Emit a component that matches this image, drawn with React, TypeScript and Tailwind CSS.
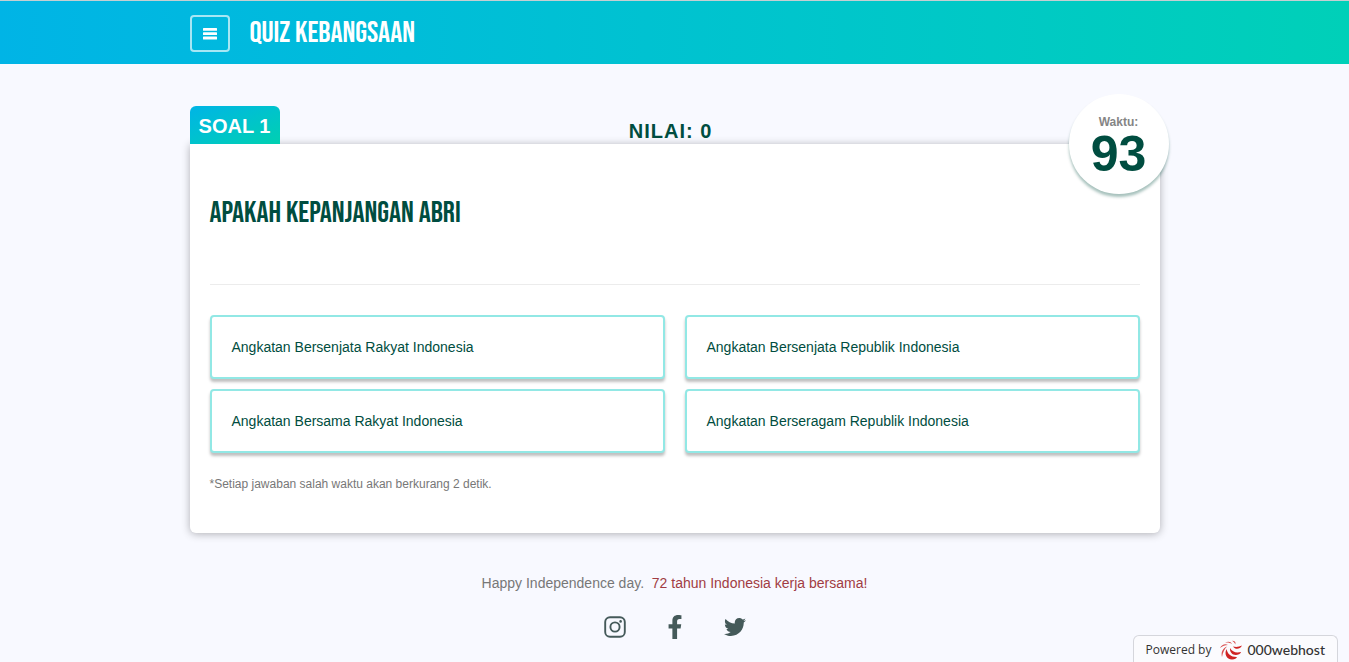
import { FaFacebookF, FaTwitter } from "react-icons/fa";

const answers = [
  "Angkatan Bersenjata Rakyat Indonesia",
  "Angkatan Bersenjata Republik Indonesia",
  "Angkatan Bersama Rakyat Indonesia",
  "Angkatan Berseragam Republik Indonesia",
];

function MenuIcon() {
  return (
    <svg viewBox="0 0 14 12" className="h-3 w-[14px]" fill="currentColor" aria-hidden="true">
      <rect y="0" width="14" height="2.800" rx=".5" />
      <rect y="4.300" width="14" height="2.800" rx=".5" />
      <rect y="8.600" width="14" height="2.800" rx=".5" />
    </svg>
  );
}

function InstagramIcon() {
  return (
    <svg viewBox="0 0 24 24" className="size-6" fill="none" stroke="currentColor" strokeWidth="1.9" aria-hidden="true">
      <rect x="2.200" y="2.200" width="19.600" height="19.600" rx="4.800" />
      <circle cx="12" cy="12" r="4.600" />
      <circle cx="17.600" cy="6.400" r="1.300" fill="currentColor" stroke="none" />
    </svg>
  );
}

function HostLogo() {
  return (
    <svg viewBox="0 0 24 20" className="h-5 w-6" fill="#cf2323" aria-hidden="true">
      <path d="M1 8C3 4.500 6 3.500 9 5C6 5 3.500 6 1 8Z" opacity=".8" />
      <path d="M6 2.600C9 1 12 1.500 13 4C11 2.800 9 2.300 6 2.600Z" opacity=".8" />
      <path d="M13 .8C16 .8 17 2 16.300 4.500C15.600 2.800 14.600 1.600 13 .8Z" opacity=".8" />
      <path d="M8 6.500C3.500 8.500 1.800 12 3 17C3.800 12.500 5.500 9 8 6.500Z" opacity=".8" />
      <path d="M7.500 9C5 14 7.500 19.400 13 19.400C16 19.400 17.300 18.300 18 17C12 17.200 8.500 14 7.500 9Z" />
      <path d="M11 8C10.600 13.500 15 16.400 20 14.300C21.200 13.800 21.700 13 22 12C17 13.200 13.300 12 11 8Z" />
      <path d="M14 6.500C16.500 10 21 9.300 23 5.500C20 7 17 7.400 14 6.500Z" />
    </svg>
  );
}

export default function App() {
  return (
    <div className="flex min-h-screen flex-col bg-[#f8f9ff] font-['Liberation_Sans',Arial,sans-serif] text-[#004d40]">
      <header className="border-t border-[#c5cfd2] bg-linear-to-r from-[#00b4e6] to-[#00d0b8]">
        <div className="mx-auto flex h-[63px] max-w-[970px] items-center gap-5">
          <button
            type="button"
            aria-label="Menu"
            className="mt-0.5 flex h-[37px] w-10 items-center justify-center rounded border-2 border-white/65 text-white"
          >
            <MenuIcon />
          </button>
          <h1 className="font-['Bebas_Neue',Roboto,sans-serif] text-3xl font-normal whitespace-nowrap text-white">
            QUIZ KEBANGSAAN
          </h1>
        </div>
      </header>

      <main className="mx-auto w-full max-w-[970px] pt-[30px]">
        <div className="relative flex h-[50px] items-end justify-between">
          <h2 className="flex h-[38px] w-[90px] items-center justify-center rounded-t-md bg-linear-to-br from-[#00b4e6] to-[#00d0b0] pt-0.5 text-xl font-bold text-white">
            SOAL 1
          </h2>
          <p className="text-xl leading-[26px] font-bold tracking-wider">NILAI: 0</p>
          <div className="w-[98px]" />
          <div className="absolute top-0 -right-[9px] z-10 flex size-[100px] flex-col items-center rounded-full bg-white pt-5 shadow-[0_3px_3px_rgba(0,77,64,0.35)]">
            <span className="text-xs leading-4 font-bold text-[#858585]">Waktu:</span>
            <span className="text-[50px] leading-12 font-bold">93</span>
          </div>
        </div>

        <section className="rounded-b-md bg-white px-5 pt-[50px] pb-10 shadow-[0_1px_8px_rgba(0,0,0,0.3)]">
          <h2 className="border-b border-[#ececec] pb-[52px] font-['Bebas_Neue',Roboto,sans-serif] text-3xl leading-[38px] font-normal">
            APAKAH KEPANJANGAN ABRI
          </h2>
          <div className="mt-[30px] grid grid-cols-2 gap-x-5 gap-y-[10px]">
            {answers.map((answer) => (
              <button
                key={answer}
                type="button"
                className="h-16 rounded border-2 border-[#92e8e5] bg-white px-5 text-left text-sm shadow-[0_3px_3px_rgba(0,0,0,0.25)]"
              >
                {answer}
              </button>
            ))}
          </div>
          <p className="mt-[22px] text-xs leading-[18px] text-[#777777]">
            *Setiap jawaban salah waktu akan berkurang 2 detik.
          </p>
        </section>
      </main>

      <footer className="relative flex flex-1 flex-col items-center pt-10">
        <p className="text-sm leading-5 text-[#777777]">
          Happy Independence day.&nbsp; <span className="text-[#a13c43]">72 tahun Indonesia kerja bersama!</span>
        </p>
        <nav className="mt-[22px] flex items-center gap-9 text-[#455a5a]" aria-label="Social media">
          <a href="#instagram" aria-label="Instagram" className="flex w-6 justify-center">
            <InstagramIcon />
          </a>
          <a href="#facebook" aria-label="Facebook" className="flex w-6 justify-center">
            <FaFacebookF className="size-6" />
          </a>
          <a href="#twitter" aria-label="Twitter" className="flex w-6 justify-center">
            <FaTwitter className="size-[22px]" />
          </a>
        </nav>
        <a
          href="#hosting"
          className="fixed right-[11px] bottom-0 flex h-[27px] items-center rounded-t-md border border-b-0 border-[#d5d6dc] bg-[#fbfbfe] px-3 pt-0.5 font-['Open_Sans',sans-serif] text-xs whitespace-nowrap text-[#333333]"
        >
          <span>Powered by</span>
          <span className="mr-1 ml-2">
            <HostLogo />
          </span>
          <span className="font-['Lato',sans-serif] text-sm font-medium">000webhost</span>
        </a>
      </footer>
    </div>
  );
}
